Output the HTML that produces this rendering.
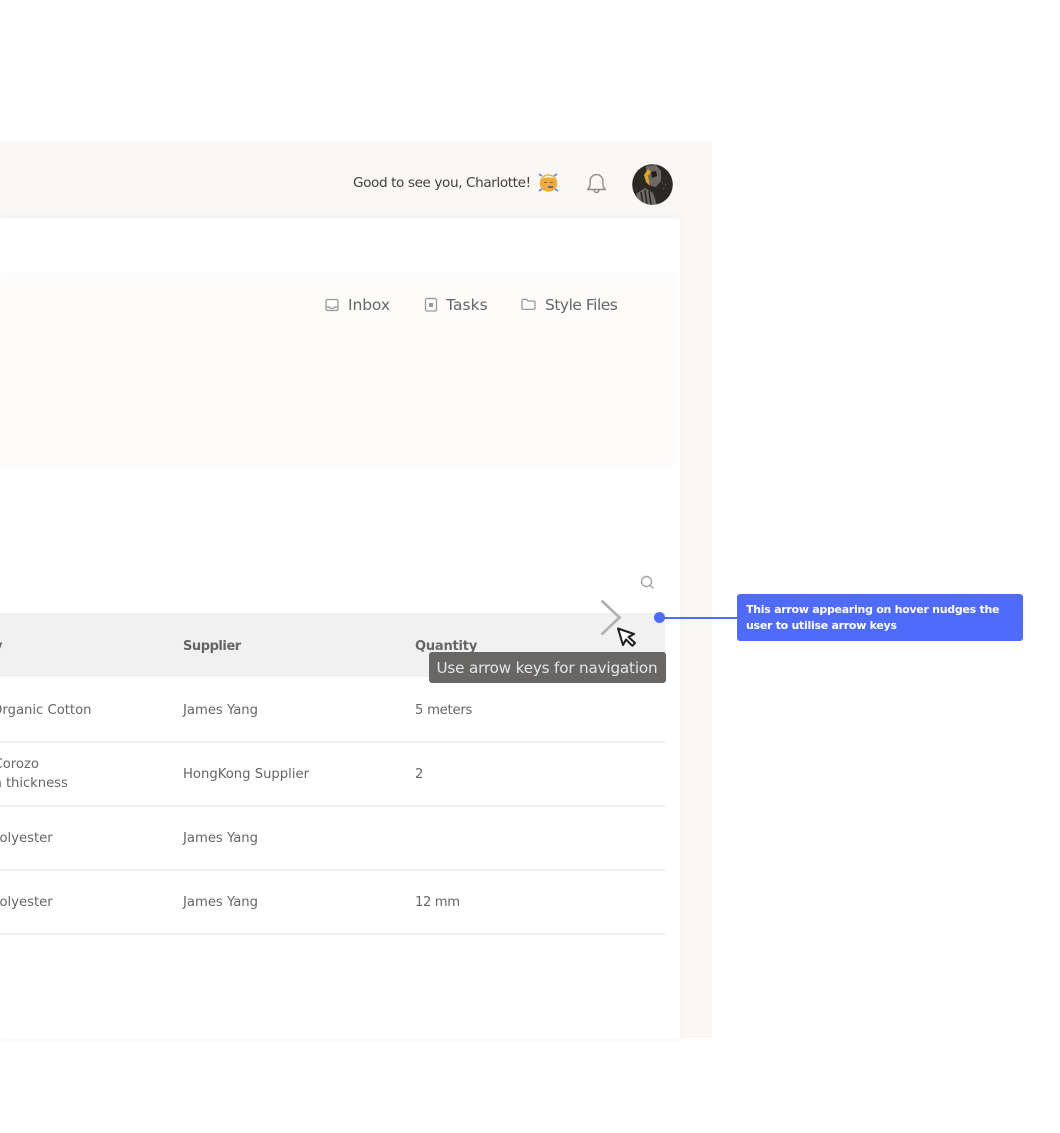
<!DOCTYPE html>
<html>
<head>
<meta charset="utf-8">
<style>
html,body{margin:0;padding:0;background:#fff}
body{position:relative;width:1060px;height:1133px;overflow:hidden;font-family:"DejaVu Sans","Liberation Sans",sans-serif;color:#666}
#w{position:absolute;left:0;top:0;width:1060px;height:1133px;filter:blur(.35px)}
.a{position:absolute}
.t{position:absolute;white-space:nowrap;font-size:13.2px;line-height:20px;color:#666;letter-spacing:0}
.l{position:absolute;left:0;width:665px;height:2px;background:#efeeec}
svg{position:absolute;overflow:visible}
</style>
</head>
<body>
<div id="w">
<div class="a" style="left:0;top:141px;width:712px;height:897px;background:#faf7f5"></div>
<div class="a" style="left:0;top:218px;width:680px;height:820px;background:#fff;border-top-right-radius:3px;box-shadow:0 0 10px rgba(0,0,0,.04)"></div>
<div class="a" style="left:0;top:274px;width:674px;height:191px;background:#fdfcfa;border-bottom-right-radius:4px;box-shadow:0 1px 5px rgba(0,0,0,.04)"></div>

<div class="t" style="left:353px;top:173px;font-size:13.6px;color:#3f3f3f;letter-spacing:-.4px">Good to see you, Charlotte!</div>
<svg style="left:538px;top:172px" width="21" height="21" viewBox="0 0 21 21">
<path d="M1 2l3 2M19 2l-3 2M1 19l3-2M20 19l-3-2" stroke="#5a78e8" stroke-width="1.500" fill="none"/>
<circle cx="10.500" cy="11" r="8.800" fill="#eeac3f"/>
<path d="M4 6.500q6.500-6 13 0q-6.500-2-13 0z" fill="#f7f0e4"/>
<path d="M6 10.500h3M12 10.500h3" stroke="#8a6a30" stroke-width="1"/>
<path d="M10 15h5" stroke="#6a6a70" stroke-width="2"/>
</svg>
<svg style="left:586px;top:172px" width="21" height="22" viewBox="0 0 21 22" fill="none" stroke="#8b8b8b" stroke-width="1.400">
<path d="M1.500 17.500c1.800-1.600 2.600-3 2.600-5.500V9a6.400 6.400 0 0 1 12.800 0v3c0 2.500.8 3.900 2.600 5.500z" stroke-linejoin="round"/>
<path d="M8 18a2.500 2.500 0 0 0 5 0"/>
</svg>
<svg style="left:632px;top:164px" width="41" height="41" viewBox="0 0 41 41">
<defs><clipPath id="c"><circle cx="20.500" cy="20.500" r="20.300"/></clipPath></defs>
<g clip-path="url(#c)">
<rect width="41" height="41" fill="#2b2a22"/>
<path d="M14 2l10-1 5 6 0 10-5 6-5-1-4-8z" fill="#6d6a64"/>
<path d="M19 8l5-1 1 5-5 2z" fill="#1e1d18"/>
<path d="M16 5l-4 6 2 7 4 4-2-10 3-4z" fill="#e2a42c"/>
<path d="M4 30l9-6 8 5 4 12H8z" fill="#6f6c67"/>
<path d="M9 28l2 13M13 26l2 15M17 27l2 14" stroke="#2b2a22" stroke-width="1.600"/>
<path d="M30 18l1 1M33 20l1 1M31 24l1 1" stroke="#5d5a54" stroke-width="1"/>
</g>
</svg>

<svg style="left:325px;top:298px" width="14" height="14" viewBox="0 0 14 14" fill="none" stroke="#9a9a9a" stroke-width="1.300">
<rect x="1" y="1.500" width="12" height="11" rx="1.500"/>
<path d="M1 9h3.500l1 1.500h3L9.500 9H13"/>
</svg>
<div class="t" style="left:348px;top:295px;font-size:15.5px;letter-spacing:-.1px">Inbox</div>
<svg style="left:424px;top:297px" width="14" height="15" viewBox="0 0 14 15" fill="none" stroke="#9a9a9a" stroke-width="1.300">
<rect x="1.500" y="1.500" width="11" height="12.500" rx="1.500"/>
<rect x="5" y="6" width="4" height="4" fill="#9a9a9a" stroke="none"/>
<path d="M4 1.500h6"/>
</svg>
<div class="t" style="left:446px;top:295px;font-size:15.5px;letter-spacing:.05px">Tasks</div>
<svg style="left:521px;top:298px" width="15" height="13" viewBox="0 0 15 13" fill="none" stroke="#9a9a9a" stroke-width="1.300">
<path d="M1 2.500A1.200 1.200 0 0 1 2.200 1.300h3.300l1.500 1.700h5.800A1.200 1.200 0 0 1 14 4.200v6a1.200 1.200 0 0 1-1.200 1.200H2.200A1.200 1.200 0 0 1 1 10.200z"/>
</svg>
<div class="t" style="left:545px;top:295px;font-size:15.5px;letter-spacing:-.5px">Style Files</div>

<svg style="left:640px;top:575px" width="15" height="15" viewBox="0 0 15 15" fill="none" stroke="#a5a5a5" stroke-width="1.400">
<circle cx="6.500" cy="6.500" r="5"/><path d="M10.200 10.200l3.300 3.300"/>
</svg>

<div class="a" style="left:0;top:613px;width:665px;height:64px;background:#f1f1f1"></div>
<div class="t" style="left:-6px;top:637px;font-weight:700;font-size:13px">y</div>
<div class="t" style="left:183px;top:637px;font-weight:700;font-size:13px;letter-spacing:-.45px">Supplier</div>
<div class="t" style="left:415px;top:637px;font-weight:700;font-size:13px;letter-spacing:-.2px">Quantity</div>

<div class="t" style="left:-8px;top:701px">Organic Cotton</div>
<div class="t" style="left:183px;top:701px">James Yang</div>
<div class="t" style="left:415px;top:701px;letter-spacing:-.25px">5 meters</div>
<div class="l" style="top:741px"></div>

<div class="t" style="left:-6.500px;top:755px">Corozo</div>
<div class="t" style="left:-11px;top:774px;letter-spacing:-.05px">m thickness</div>
<div class="t" style="left:183px;top:765px">HongKong Supplier</div>
<div class="t" style="left:415px;top:765px">2</div>
<div class="l" style="top:805px"></div>

<div class="t" style="left:-8px;top:829px">Polyester</div>
<div class="t" style="left:183px;top:829px">James Yang</div>
<div class="l" style="top:869px"></div>

<div class="t" style="left:-8px;top:893px">Polyester</div>
<div class="t" style="left:183px;top:893px">James Yang</div>
<div class="t" style="left:415px;top:893px;letter-spacing:-.4px">12 mm</div>
<div class="l" style="top:933px"></div>

<svg style="left:600px;top:599px" width="23" height="37" viewBox="0 0 23 37" fill="none" stroke="#b0b0b0" stroke-width="2.600">
<path d="M1.500 1.500L19.500 18.500 1.500 35.500"/>
</svg>
<svg style="left:616px;top:627px" width="21" height="21" viewBox="0 0 21 21">
<path d="M2 1.500l16 5.500-5.500 3 6.500 6-2.700 2.800-6.300-6.300-3 5.500z" fill="#fff" stroke="#1e1e1e" stroke-width="2" stroke-linejoin="round"/>
</svg>

<div class="a" style="left:429px;top:652px;width:237px;height:31px;background:#686766;border-radius:3px"></div>
<div class="t" style="left:436.500px;top:658px;font-size:15.2px;color:#e6e6e6;letter-spacing:-.18px">Use arrow keys for navigation</div>

<div class="a" style="left:654px;top:612px;width:11px;height:11px;border-radius:50%;background:#4f6bfb"></div>
<div class="a" style="left:660px;top:617px;width:78px;height:2px;background:#4f6bfb"></div>
<div class="a" style="left:737px;top:594px;width:286px;height:47px;background:#4f6bfb;border-radius:3px"></div>
<div class="t" style="left:746px;top:602px;font-weight:700;font-size:11px;line-height:16px;color:#fff;letter-spacing:-.28px;white-space:normal;width:275px">This arrow appearing on hover nudges the<br>user to utilise arrow keys</div>
</div>
</body>
</html>
